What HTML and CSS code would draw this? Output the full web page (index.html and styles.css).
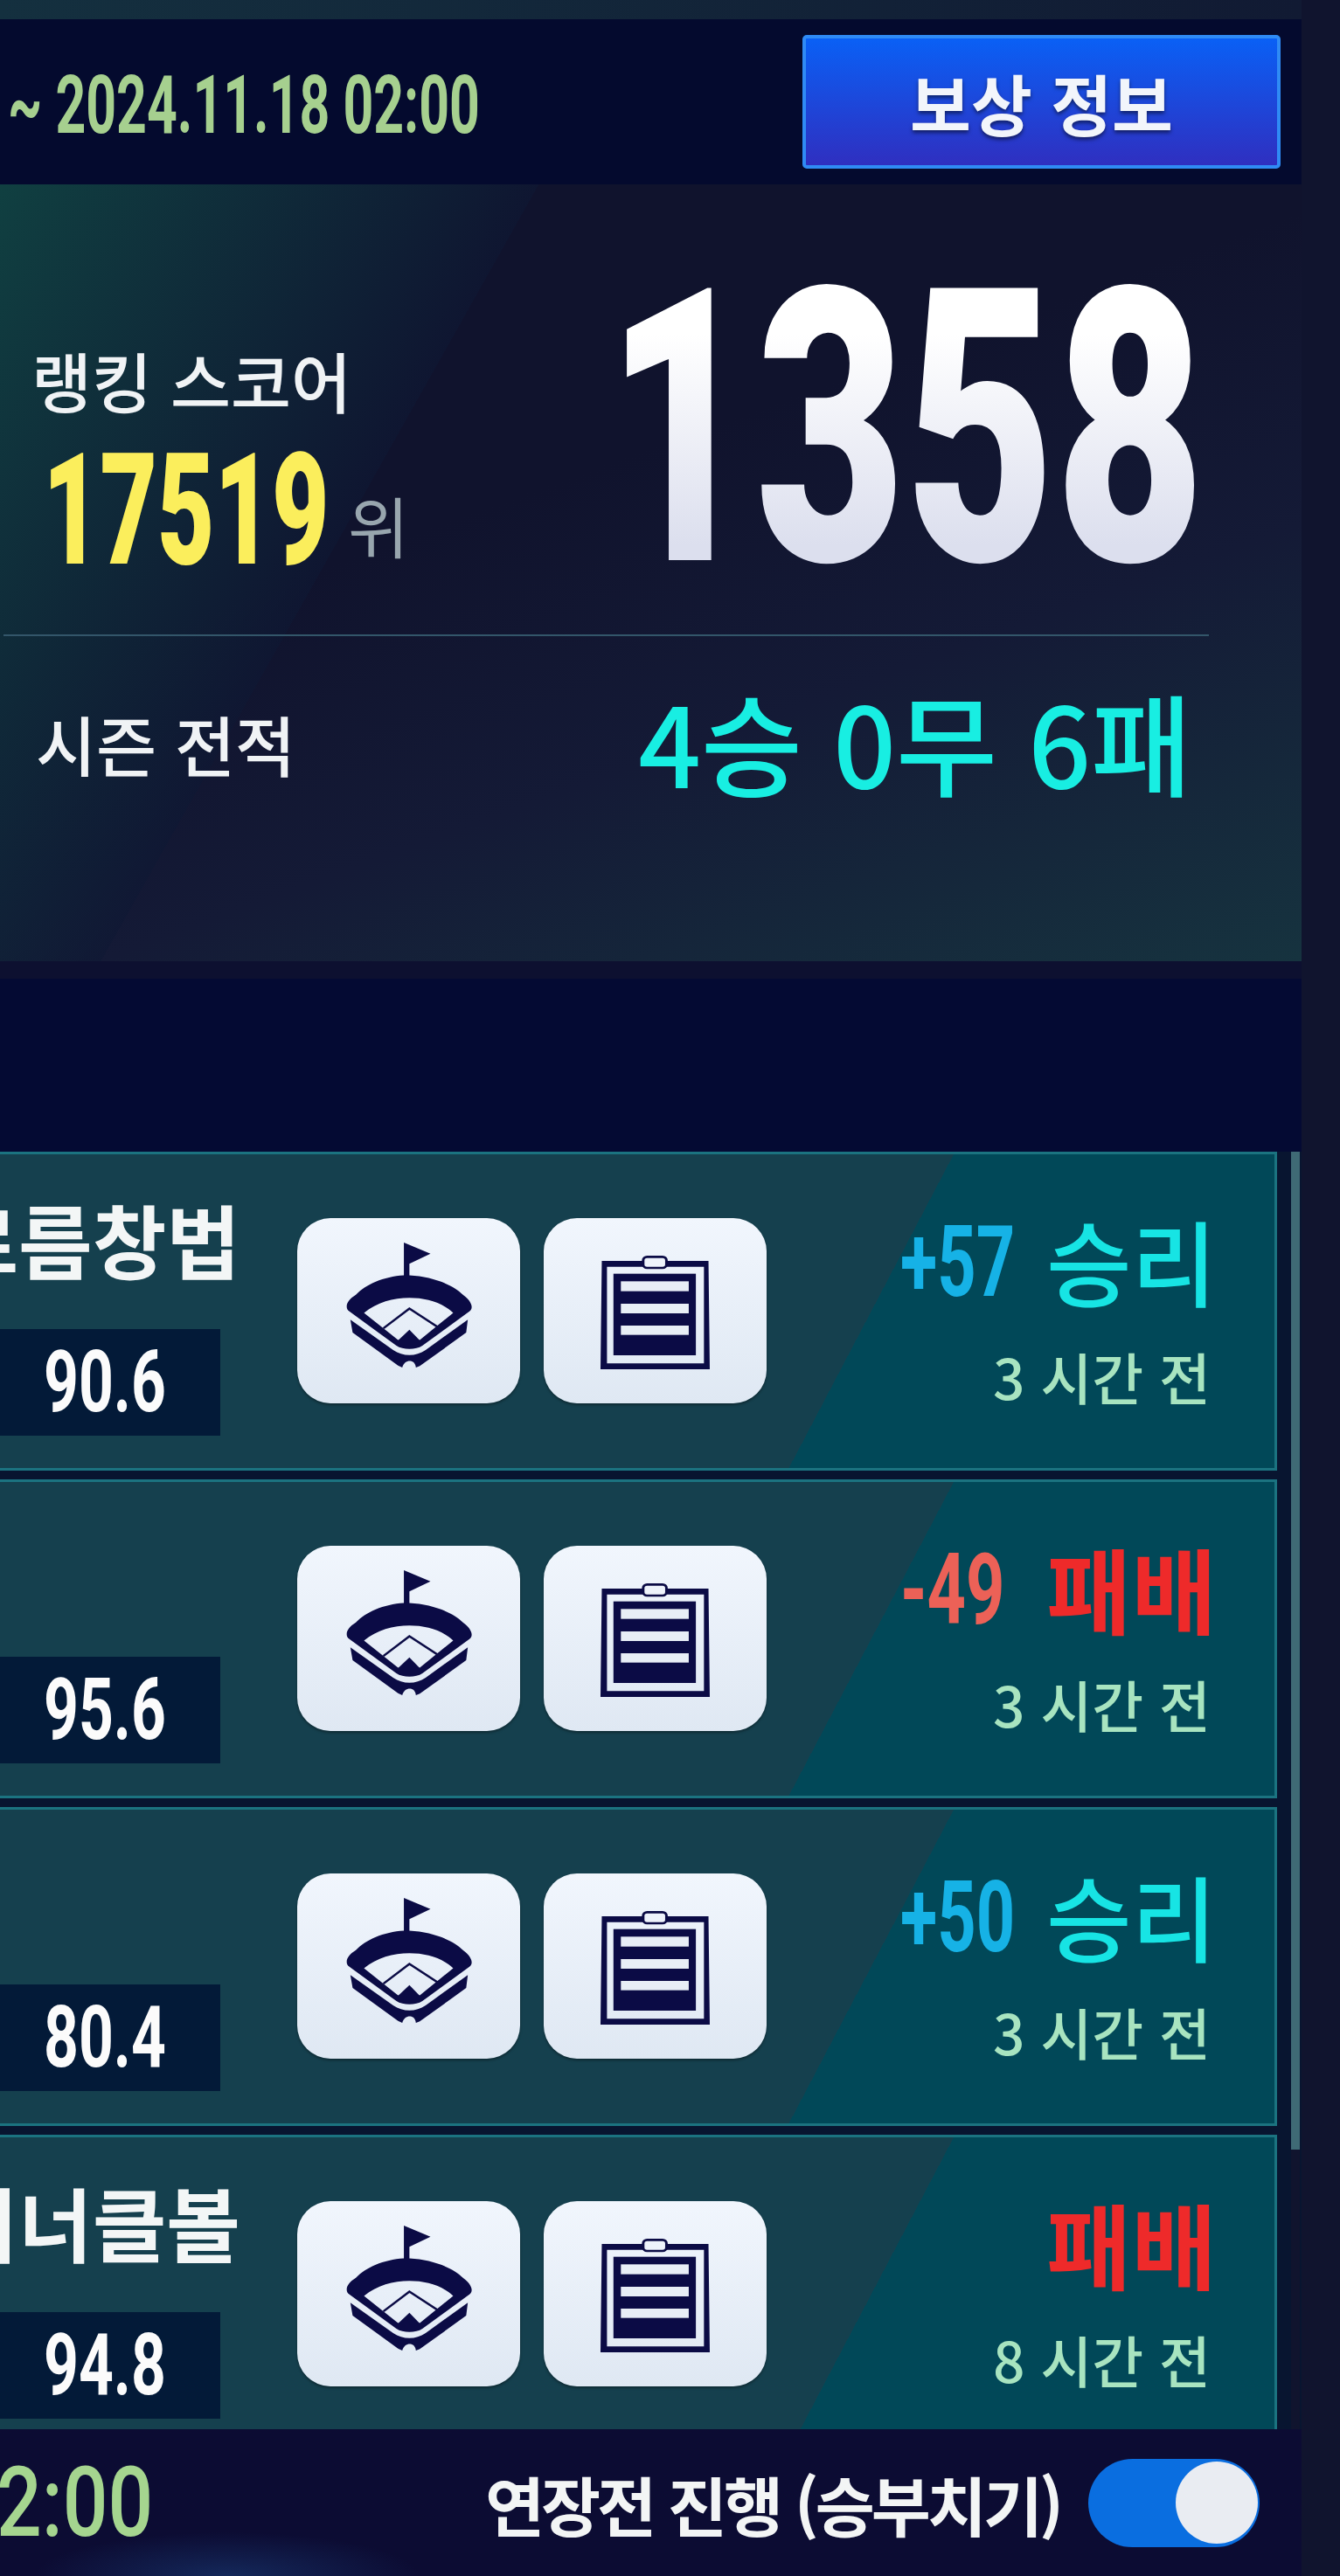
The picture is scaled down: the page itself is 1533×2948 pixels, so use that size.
FILE: index.html
```html
<!DOCTYPE html>
<html lang="ko">
<head>
    <meta charset="UTF-8">
    <meta name="viewport" content="width=device-width, initial-scale=1.0">
    <title>랭킹 스코어</title>
    <link rel="stylesheet" href="styles.css">
</head>
<body>
    <svg class="sprites" width="0" height="0">
        <symbol id="stadium" viewBox="205 155 388 430" preserveAspectRatio="none">
            <path fill="#0b0b45" fill-rule="evenodd" d="M383 268 V155 L465 193 L400 228 V268 C470 272 535 300 565 335 C590 355 600 380 585 392 L440 510 C420 525 380 525 360 510 L215 392 C200 380 205 355 235 335 C265 300 320 272 383 268 Z M260 397 L365 490 H432 L535 397 C500 360 450 345 400 345 C350 345 300 360 260 397 Z"/>
            <path fill="#0b0b45" d="M218 420 L350 525 C380 548 420 548 450 525 L580 420 L575 465 L432 580 L420 585 C418 555 385 555 378 585 L365 578 L225 465 Z"/>
            <path fill="none" stroke="#0b0b45" stroke-width="7" d="M320 450 L400 382 L500 455"/>
            <path fill="#0b0b45" d="M365 492 L400 455 L432 492 Z"/>
        </symbol>
        <symbol id="clipboard" viewBox="990 200 338 390" preserveAspectRatio="none">
            <path fill="#0b0b45" fill-rule="evenodd" d="M994 218 H1324 L1328 590 H990 Z M1010 238 V570 H1310 V238 Z"/>
            <rect x="1030" y="262" width="255" height="280" fill="#0b0b45"/>
            <rect x="1053" y="288" width="210" height="34" fill="#e8eef6"/>
            <rect x="1053" y="365" width="210" height="33" fill="#e8eef6"/>
            <rect x="1053" y="440" width="210" height="32" fill="#e8eef6"/>
            <rect x="1122" y="204" width="72" height="38" rx="12" fill="#eef3fb" stroke="#0b0b45" stroke-width="8"/>
        </symbol>
    </svg>

    <div class="screen">
        <div class="top-strip"></div>

        <div class="period-bar">
            <div class="period"><span class="narrow">~ 2024.11.18 02:00</span></div>
            <button class="reward-btn">보상 정보</button>
        </div>

        <section class="score-panel">
            <div class="score-top">
                <div class="rank-box">
                    <div class="label">랭킹 스코어</div>
                    <div class="rank">
                        <div class="rank-num"><span class="narrow">17519</span></div>
                        <span class="rank-unit">위</span>
                    </div>
                </div>
                <div class="score"><span class="narrow">1358</span></div>
            </div>
            <div class="score-line"></div>
            <div class="season">
                <div class="label">시즌 전적</div>
                <div class="season-value">4승 0무 6패</div>
            </div>
        </section>

        <div class="panel-gap"></div>
        <div class="list-head"></div>

        <div class="list-area">
            <div class="match-list">
                <article class="match">
                    <div class="team">
                        <div class="team-name">푸르름창법</div>
                        <div class="team-power"><span class="narrow">90.6</span></div>
                    </div>
                    <div class="match-btns">
                        <button class="icon-btn"><svg class="ico-stadium"><use href="#stadium"/></svg></button>
                        <button class="icon-btn"><svg class="ico-clip"><use href="#clipboard"/></svg></button>
                    </div>
                    <div class="result">
                        <div class="result-top"><div class="delta win-delta"><span class="narrow">+57</span></div><span class="outcome win">승리</span></div>
                        <div class="ago">3 시간 전</div>
                    </div>
                </article>
                <article class="match">
                    <div class="team">
                        <div class="team-name"></div>
                        <div class="team-power"><span class="narrow">95.6</span></div>
                    </div>
                    <div class="match-btns">
                        <button class="icon-btn"><svg class="ico-stadium"><use href="#stadium"/></svg></button>
                        <button class="icon-btn"><svg class="ico-clip"><use href="#clipboard"/></svg></button>
                    </div>
                    <div class="result">
                        <div class="result-top"><div class="delta lose-delta"><span class="narrow">-49</span></div><span class="outcome lose">패배</span></div>
                        <div class="ago">3 시간 전</div>
                    </div>
                </article>
                <article class="match">
                    <div class="team">
                        <div class="team-name"></div>
                        <div class="team-power"><span class="narrow">80.4</span></div>
                    </div>
                    <div class="match-btns">
                        <button class="icon-btn"><svg class="ico-stadium"><use href="#stadium"/></svg></button>
                        <button class="icon-btn"><svg class="ico-clip"><use href="#clipboard"/></svg></button>
                    </div>
                    <div class="result">
                        <div class="result-top"><div class="delta win-delta"><span class="narrow">+50</span></div><span class="outcome win">승리</span></div>
                        <div class="ago">3 시간 전</div>
                    </div>
                </article>
                <article class="match match-cut">
                    <div class="team">
                        <div class="team-name">마이너클볼</div>
                        <div class="team-power"><span class="narrow">94.8</span></div>
                    </div>
                    <div class="match-btns">
                        <button class="icon-btn"><svg class="ico-stadium"><use href="#stadium"/></svg></button>
                        <button class="icon-btn"><svg class="ico-clip"><use href="#clipboard"/></svg></button>
                    </div>
                    <div class="result">
                        <div class="result-top"><span class="outcome lose">패배</span></div>
                        <div class="ago">8 시간 전</div>
                    </div>
                </article>
            </div>
            <div class="scrollbar"><div class="scroll-thumb"></div></div>
        </div>

        <footer class="footer">
            <div class="footer-time"><span class="narrow">2:00</span></div>
            <div class="overtime">
                <span class="overtime-label">연장전 진행 (승부치기)</span>
                <div class="toggle"><div class="knob"></div></div>
            </div>
        </footer>
    </div>
</body>
</html>
```

FILE: styles.css
```css
html, body {
    margin: 0;
    padding: 0;
    background: #10142e;
}
body {
    width: 1533px;
    height: 2948px;
    overflow: hidden;
    font-family: "Noto Sans CJK KR", "Noto Sans", sans-serif;
    color: #fff;
}
.sprites {
    position: absolute;
}
.screen {
    width: 1489px;
    height: 2948px;
    display: flex;
    flex-direction: column;
    overflow: hidden;
}
.top-strip {
    height: 22px;
    background: linear-gradient(90deg, #14303f, #111a33);
}

/* game numerals are a condensed face, so squeeze them */
.narrow {
    display: inline-block;
    white-space: nowrap;
    transform-origin: left center;
}

/* period bar */
.period-bar {
    height: 189px;
    box-sizing: border-box;
    background: #040a2e;
    display: flex;
    align-items: center;
    justify-content: space-between;
    padding: 0 24px 0 9px;
}
.period {
    width: 540px;
    margin-top: 8px;
    font-family: Roboto, sans-serif;
    font-weight: 700;
    font-size: 92px;
    color: #a6d08f;
}
.period .narrow {
    transform: scaleX(0.66);
}
.reward-btn {
    width: 547px;
    height: 153px;
    box-sizing: border-box;
    border: 4px solid #2f8bf5;
    border-radius: 5px;
    background: linear-gradient(180deg, #0a60f5, #2f2fc0);
    color: #f2f5fb;
    font-family: inherit;
    font-size: 76px;
    font-weight: 700;
    text-shadow: 0 3px 4px rgba(0, 0, 0, 0.5);
}

/* score panel */
.score-panel {
    height: 889px;
    box-sizing: border-box;
    background:
        linear-gradient(119.4deg, rgba(16, 66, 66, 0.95), rgba(14, 24, 52, 0.6) 537px, transparent 537px),
        linear-gradient(160deg, #10132d 40%, #141a36 65%, #16333f 100%);
}
.score-top {
    height: 515px;
    display: flex;
    align-items: flex-start;
    justify-content: space-between;
    padding: 0 141px 0 36px;
    box-sizing: border-box;
}
.rank-box {
    padding-top: 174px;
}
.label {
    font-size: 75px;
    font-weight: 500;
    line-height: 100px;
    color: #f0f3f5;
    white-space: nowrap;
}
.rank {
    display: flex;
    align-items: flex-end;
    margin-top: 25px;
    padding-left: 13px;
}
.rank-num {
    width: 327px;
    font-family: Roboto, sans-serif;
    font-weight: 900;
    font-size: 178px;
    line-height: 148px;
    color: #fbee5c;
}
.rank-num .narrow {
    transform: scaleX(0.635);
}
.rank-unit {
    font-size: 76px;
    line-height: 96px;
    color: #98a6ae;
    margin: 0 0 10px 22px;
}
.score {
    width: 655px;
    flex: none;
    font-family: Roboto, sans-serif;
    font-weight: 900;
    font-size: 438px;
    line-height: 438px;
    padding-top: 62px;
}
.score .narrow {
    transform: scaleX(0.675);
    background: linear-gradient(180deg, #fff 25%, #dcdfee 80%);
    -webkit-background-clip: text;
    background-clip: text;
    color: transparent;
}
.score-line {
    height: 2px;
    margin: 0 106px 0 4px;
    background: #33566a;
}
.season {
    display: flex;
    align-items: center;
    justify-content: space-between;
    padding: 54px 125px 0 41px;
}
.season-value {
    font-size: 126px;
    line-height: 130px;
    color: #18eee2;
    font-weight: 500;
    white-space: nowrap;
}
.season .label {
    margin-top: 8px;
}

.panel-gap {
    height: 20px;
    background: #0d1030;
}
.list-head {
    height: 198px;
    background: #040a33;
}

/* match list */
.list-area {
    height: 1462px;
    display: flex;
    overflow: hidden;
    background: #081530;
}
.match-list {
    width: 1461px;
    display: flex;
    flex-direction: column;
    gap: 10px;
}
.match {
    flex: none;
    height: 365px;
    box-sizing: border-box;
    border: 3px solid #1b7380;
    border-left: none;
    background: linear-gradient(117.7deg, #15404e 966px, #014858 966px);
    display: flex;
}
.match-cut {
    height: 337px;
    border-bottom: none;
}
.team {
    width: 270px;
    flex: none;
    padding-top: 40px;
    display: flex;
    flex-direction: column;
    align-items: flex-end;
}
.team-name {
    height: 112px;
    margin-right: -5px;
    font-size: 92px;
    line-height: 112px;
    font-weight: 700;
    color: #f3f6f6;
    white-space: nowrap;
}
.team-power {
    width: 252px;
    height: 122px;
    margin: 48px 18px 0 0;
    box-sizing: border-box;
    background: #031a38;
    font-family: Roboto, sans-serif;
    font-weight: 700;
    font-size: 98px;
    line-height: 122px;
    padding-left: 50px;
    color: #fbfbfb;
}
.team-power .narrow {
    transform: scaleX(0.71);
}
.match-btns {
    display: flex;
    gap: 27px;
    margin: 73px 0 0 70px;
}
.icon-btn {
    width: 255px;
    height: 212px;
    border: none;
    padding: 0;
    border-radius: 38px;
    background: linear-gradient(180deg, #f1f6fd, #dfe8f3);
    box-shadow: 0 2px 3px rgba(0, 0, 0, 0.35);
    display: flex;
    align-items: center;
    justify-content: center;
}
.ico-stadium {
    width: 144px;
    height: 143px;
    margin-top: -13px;
}
.ico-clip {
    width: 125px;
    height: 130px;
    margin-top: 4px;
}
.result {
    flex: 1;
    padding: 54px 66px 0 0;
    display: flex;
    flex-direction: column;
    align-items: flex-end;
}
.result-top {
    display: flex;
    align-items: center;
    height: 132px;
}
.delta {
    width: 130px;
    margin: 6px 37px 0 0;
    font-family: Roboto, sans-serif;
    font-weight: 700;
    font-size: 114px;
}
.delta .narrow {
    transform: scaleX(0.68);
}
.win-delta {
    color: #16b2e6;
}
.lose-delta {
    color: #ec6157;
}
.outcome {
    font-size: 106px;
    font-weight: 500;
    white-space: nowrap;
}
.outcome.win {
    color: #17e4e4;
}
.outcome.lose {
    color: #ee2a2a;
    font-weight: 700;
}
.ago {
    margin: 22px 7px 0 0;
    font-size: 64px;
    font-weight: 500;
    line-height: 90px;
    color: #a8e4c0;
    white-space: nowrap;
}
.scrollbar {
    width: 10px;
    margin-left: 16px;
    background: #10142e;
}
.scroll-thumb {
    height: 1142px;
    background: #3f6a75;
}

/* footer */
.footer {
    flex: 1;
    background:
        radial-gradient(ellipse 220px 50px at 260px 100%, #14285a, transparent),
        #0c0c33;
    display: flex;
    align-items: center;
    justify-content: space-between;
    padding: 0 48px 0 0;
}
.footer-time {
    width: 180px;
    margin-left: -4px;
    font-family: Roboto, sans-serif;
    font-weight: 500;
    font-size: 111px;
    color: #a5d58f;
}
.footer-time .narrow {
    transform: scaleX(0.82);
}
.overtime {
    display: flex;
    align-items: center;
    gap: 32px;
}
.overtime-label {
    font-size: 74px;
    font-weight: 700;
    letter-spacing: -4px;
    color: #f3f5f5;
    white-space: nowrap;
}
.toggle {
    width: 196px;
    height: 101px;
    border-radius: 51px;
    background: #0a6ee0;
    display: flex;
    align-items: center;
    justify-content: flex-end;
    padding-right: 2px;
    box-sizing: border-box;
}
.knob {
    width: 94px;
    height: 94px;
    border-radius: 50%;
    background: #e9ecf2;
}
```
